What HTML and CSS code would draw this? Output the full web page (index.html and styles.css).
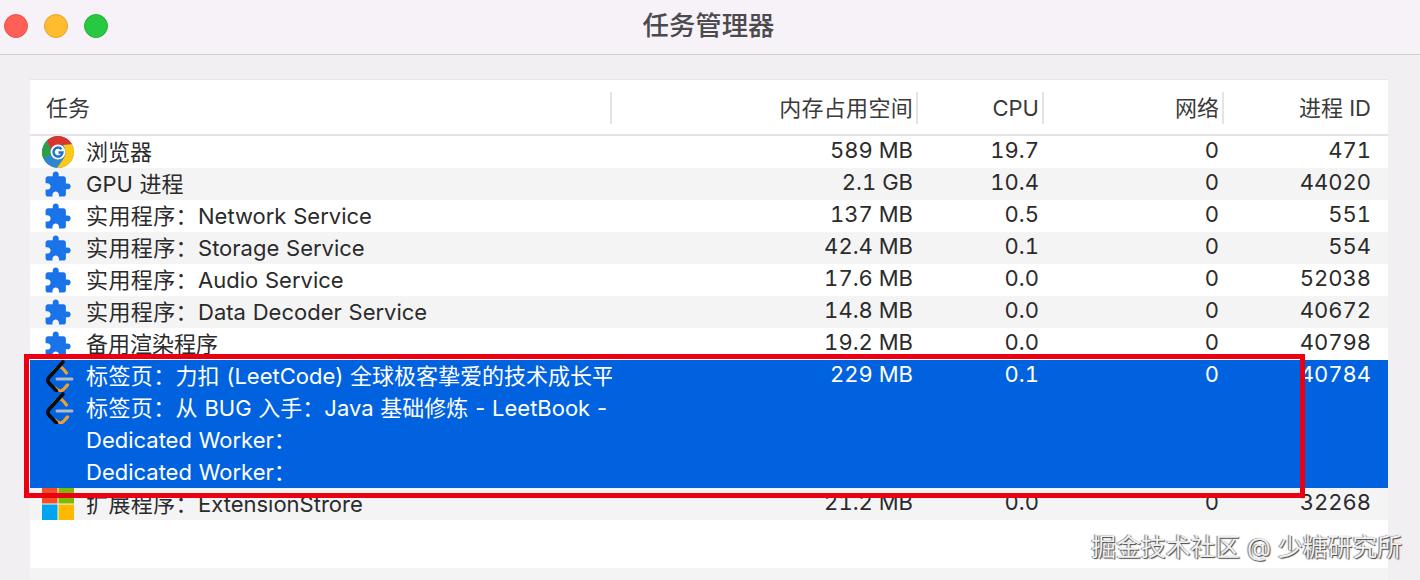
FILE: index.html
```html
<!DOCTYPE html>
<html lang="zh">
<head>
<meta charset="utf-8">
<title>任务管理器</title>
<link rel="stylesheet" href="styles.css">
</head>
<body>
<svg class="defs" width="0" height="0" aria-hidden="true">
  <defs>
    <symbol id="puzzle" viewBox="-1 -1.900 26.800 26.800">
      <path fill="#1a73e8" d="M20.5 11H19V7c0-1.1-.9-2-2-2h-4V3.500C13 2.120 11.880 1 10.500 1S8 2.120 8 3.500V5H4c-1.100 0-1.990.900-1.990 2v3.800H3.500c1.490 0 2.700 1.210 2.700 2.700s-1.210 2.700-2.700 2.700H2V20c0 1.100.900 2 2 2h3.800v-1.500c0-1.490 1.210-2.700 2.700-2.700 1.490 0 2.700 1.210 2.700 2.700V22H17c1.100 0 2-.900 2-2v-4h1.500c1.380 0 2.500-1.120 2.500-2.500S21.880 11 20.500 11z"/>
    </symbol>
    <symbol id="leet" viewBox="0 0 32 32">
      <path d="M11 12.500C13 10 15 7 18 7c2.500 0 4.500 3.500 6.500 6M13 28c2 2 3.500 3.500 6 3 2.500-.5 4.500-4 6.500-6" fill="none" stroke="#f0a030" stroke-width="3.200" stroke-linecap="round"/>
      <path d="M21 2 7 17.500c-1.800 2-1.800 3.500 0 5.500l7.500 8" fill="none" stroke="#0b0b0b" stroke-width="3.600" stroke-linecap="round"/>
      <path d="M15 19h15" fill="none" stroke="#b4bac8" stroke-width="3" stroke-linecap="round"/>
    </symbol>
    <symbol id="chrome" viewBox="0 0 32 32">
      <circle cx="16" cy="16" r="16" fill="#2f86d0"/>
      <path d="M5 4.500A16 16 0 0 1 30 8.200L17 9C13 9 10 11 9 14Z" fill="#d9352d"/>
      <path d="M5 4.500A16 16 0 0 0 1.500 22.800L9 19C8 17 8 15 9 14Z" fill="#2f9e47"/>
      <path d="M30 8.200A16 16 0 0 1 15 32L22 22C24 19 24.500 13 21 9Z" fill="#fbc916"/>
      <circle cx="16" cy="16" r="7.500" fill="#fff"/>
      <path d="M19.500 13.200A4.500 4.500 0 1 0 20.500 16.500H16.500" fill="none" stroke="#1a73c8" stroke-width="2.400"/>
    </symbol>
    <symbol id="windows" viewBox="0 0 32 32">
      <rect x="0" y="0" width="15.500" height="15.500" fill="#f25022"/>
      <rect x="16.500" y="0" width="15.500" height="15.500" fill="#7fba00"/>
      <rect x="0" y="16.500" width="15.500" height="15.500" fill="#00a4ef"/>
      <rect x="16.500" y="16.500" width="15.500" height="15.500" fill="#ffb900"/>
    </symbol>
  </defs>
</svg>
<div class="window">
  <header class="titlebar">
    <div class="lights">
      <span class="light red"></span>
      <span class="light yellow"></span>
      <span class="light green"></span>
    </div>
    <h1 class="title">任务管理器</h1>
  </header>
  <main class="content">
    <section class="panel">
      <div class="row head">
        <div class="cell task sep">任务</div>
        <div class="cell num sep spaced">内存占用空间</div>
        <div class="cell num sep">CPU</div>
        <div class="cell num sep">网络</div>
        <div class="cell num last">进程 ID</div>
      </div>
      <div class="rows">
        <div class="row">
          <div class="cell task"><svg class="icon"><use href="#chrome"/></svg><span class="name">浏览器</span></div>
          <div class="cell num">589 MB</div><div class="cell num">19.7</div><div class="cell num">0</div><div class="cell num last">471</div>
        </div>
        <div class="row alt">
          <div class="cell task"><svg class="icon"><use href="#puzzle"/></svg><span class="name">GPU 进程</span></div>
          <div class="cell num">2.1 GB</div><div class="cell num">10.4</div><div class="cell num">0</div><div class="cell num last">44020</div>
        </div>
        <div class="row">
          <div class="cell task"><svg class="icon"><use href="#puzzle"/></svg><span class="name"><span class="prefix">实用程序：</span>Network Service</span></div>
          <div class="cell num">137 MB</div><div class="cell num">0.5</div><div class="cell num">0</div><div class="cell num last">551</div>
        </div>
        <div class="row alt">
          <div class="cell task"><svg class="icon"><use href="#puzzle"/></svg><span class="name"><span class="prefix">实用程序：</span>Storage Service</span></div>
          <div class="cell num">42.4 MB</div><div class="cell num">0.1</div><div class="cell num">0</div><div class="cell num last">554</div>
        </div>
        <div class="row">
          <div class="cell task"><svg class="icon"><use href="#puzzle"/></svg><span class="name"><span class="prefix">实用程序：</span>Audio Service</span></div>
          <div class="cell num">17.6 MB</div><div class="cell num">0.0</div><div class="cell num">0</div><div class="cell num last">52038</div>
        </div>
        <div class="row alt">
          <div class="cell task"><svg class="icon"><use href="#puzzle"/></svg><span class="name"><span class="prefix">实用程序：</span>Data Decoder Service</span></div>
          <div class="cell num">14.8 MB</div><div class="cell num">0.0</div><div class="cell num">0</div><div class="cell num last">40672</div>
        </div>
        <div class="row">
          <div class="cell task"><svg class="icon"><use href="#puzzle"/></svg><span class="name">备用渲染程序</span></div>
          <div class="cell num">19.2 MB</div><div class="cell num">0.0</div><div class="cell num">0</div><div class="cell num last">40798</div>
        </div>
        <div class="selected">
          <div class="row">
            <div class="cell task"><svg class="icon"><use href="#leet"/></svg><span class="name"><span class="prefix">标签页：</span>力扣 (LeetCode) 全球极客挚爱的技术成长平台</span></div>
            <div class="cell num">229 MB</div><div class="cell num">0.1</div><div class="cell num">0</div><div class="cell num last">40784</div>
          </div>
          <div class="row">
            <div class="cell task"><svg class="icon"><use href="#leet"/></svg><span class="name"><span class="prefix">标签页：</span>从 BUG 入手：Java 基础修炼 - LeetBook - 力扣</span></div>
          </div>
          <div class="row">
            <div class="cell task"><span class="icon"></span><span class="name">Dedicated Worker：</span></div>
          </div>
          <div class="row">
            <div class="cell task"><span class="icon"></span><span class="name">Dedicated Worker：</span></div>
          </div>
        </div>
        <div class="row alt">
          <div class="cell task"><svg class="icon"><use href="#windows"/></svg><span class="name"><span class="prefix">扩展程序：</span>ExtensionStrore</span></div>
          <div class="cell num">21.2 MB</div><div class="cell num">0.0</div><div class="cell num">0</div><div class="cell num last">32268</div>
        </div>
      </div>
      <div class="panel-foot"></div>
    </section>
  </main>
  <div class="highlight"></div>
  <div class="watermark">掘金技术社区 @ 少糖研究所</div>
</div>
</body>
</html>
```
FILE: styles.css
```css
* { box-sizing: border-box; }
html, body { margin: 0; padding: 0; }
body {
  width: 1420px;
  height: 580px;
  overflow: hidden;
  font-family: "Inter", "Noto Sans CJK SC", sans-serif;
  color: #2b2b2b;
  background: #f1eff2;
}
.defs { position: absolute; }
.window {
  position: relative;
  width: 1420px;
  height: 580px;
  display: flex;
  flex-direction: column;
  overflow: hidden;
}
.titlebar {
  position: relative;
  height: 55px;
  flex: none;
  display: flex;
  align-items: center;
  justify-content: center;
  background: #f6f2f8;
  border-bottom: 1px solid #cfcdd0;
}
.lights {
  position: absolute;
  left: 4px;
  top: 14px;
  display: flex;
  gap: 16px;
}
.light {
  width: 24px;
  height: 24px;
  border-radius: 50%;
}
.red { background: #ff5f57; border: 1px solid #e5534b; }
.yellow { background: #febc2e; border: 1px solid #e3a52a; }
.green { background: #28c840; border: 1px solid #24b23a; }
.title {
  margin: 0 3px 4px 0;
  font-size: 26.400px;
  font-weight: 500;
  line-height: 36px;
  color: #4b4a4c;
}
.content {
  flex: 1;
  min-height: 0;
  padding: 24px 32px 0 30px;
}
.panel {
  height: 100%;
  background: #fff;
  border-top: 1px solid #e6e5e7;
  display: flex;
  flex-direction: column;
}
.row {
  display: grid;
  grid-template-columns: 582px 306px 126px 180px 164px;
  height: 32px;
  align-items: center;
  font-size: 22px;
  line-height: 32px;
  white-space: nowrap;
}
.alt { background: #f5f4f5; }
.head {
  height: 56px;
  flex: none;
  border-bottom: 2px solid #e4e3e5;
  color: #3a3a3a;
}
.head .cell { height: 32px; margin-top: 2px; }
.head .num { padding-right: 3px; }
.head .spaced { letter-spacing: .3px; }
.head .last { padding-right: 17px; }
.cell {
  min-width: 0;
  overflow: hidden;
}
.task {
  display: flex;
  align-items: center;
  padding-left: 12px;
}
.head .task { padding-left: 16px; }
.num {
  text-align: right;
  padding-right: 5px;
}
.row:not(.head) .num {
  height: 32px;
  line-height: 28px;
  font-variant-numeric: tabular-nums;
}
.row:not(.head) .last { padding-right: 17px; }
.sep { border-right: 2px solid #e4e3e5; }
.icon {
  flex: none;
  display: block;
  width: 32px;
  height: 32px;
  margin-right: 12px;
}
.name { word-spacing: .6px; }
.prefix { letter-spacing: .4px; }
.selected {
  background: #0162e0;
  color: #fff;
}
.panel-foot {
  margin-top: 48px;
  flex: 1;
  background: #f5f4f5;
}
.highlight {
  position: absolute;
  left: 24px;
  top: 354px;
  width: 1281px;
  height: 144px;
  border: 5px solid #ea0010;
}
.watermark {
  position: absolute;
  right: 18px;
  top: 530px;
  font-size: 24.800px;
  line-height: 34px;
  color: #f0f0f0;
  text-shadow: 1px 1px 1px #444, -1px 0 1px #777;
}
```
